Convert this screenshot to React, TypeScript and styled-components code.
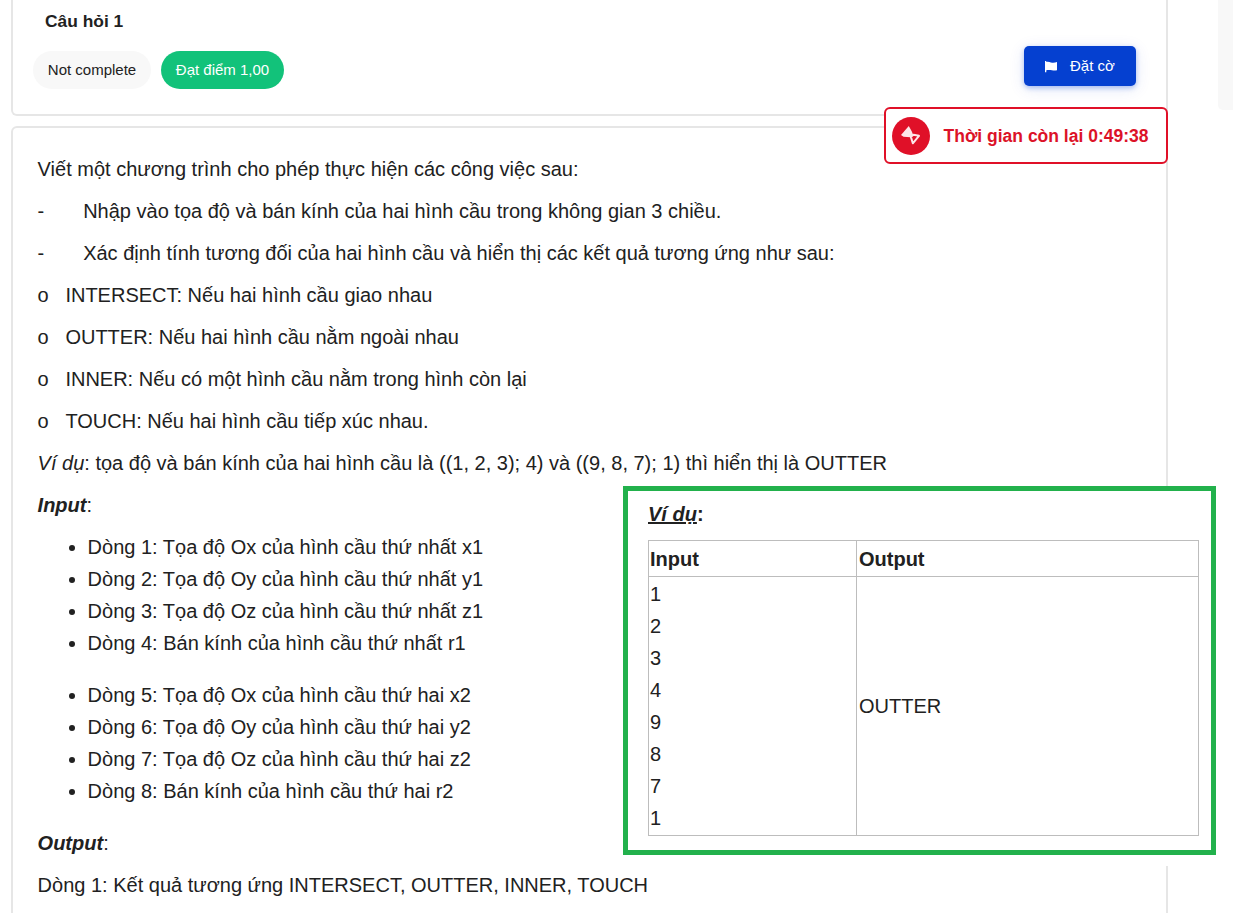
import React from 'react';
import styled, { createGlobalStyle, css } from 'styled-components';

const GlobalStyle = createGlobalStyle`
  * { box-sizing: border-box; }
  html, body { margin: 0; height: 100%; overflow: hidden; background: #fff; }
  body {
    font-family: 'Liberation Sans', Arial, sans-serif;
    font-size: 20px;
    line-height: 32px;
    color: #212121;
  }
`;

const Page = styled.div`
  position: relative;
  display: flex;
  justify-content: space-between;
  height: 913px;
  overflow: hidden;
`;

const Column = styled.main`
  display: flex;
  flex-direction: column;
  gap: 10px;
  width: 1157px;
  margin-left: 11px;
`;

const SidePanel = styled.aside`
  width: 15px;
  height: 110px;
  background: #f8f8f8;
  border-bottom-left-radius: 5px;
`;

const card = css`
  border: 2px solid #e6e6e6;
  flex: none;
`;

const InfoCard = styled.section`
  ${card}
  display: flex;
  justify-content: space-between;
  align-items: flex-start;
  height: 116px;
  border-top: 0;
  border-radius: 0 0 6px 6px;
  padding: 0 30px 0 20px;
`;

const QuestionCard = styled.section`
  ${card}
  height: 860px;
  border-radius: 6px;
  padding: 25px 25px 25px 24.6px;
`;

const QuestionTitle = styled.h3`
  margin: 9px 0 18px 12px;
  font-size: 17.4px;
  line-height: 24px;
  font-weight: 700;
`;

const Pills = styled.div`
  display: flex;
  gap: 10px;
`;

const Pill = styled.span<{ $tone: 'plain' | 'success' }>`
  display: flex;
  align-items: center;
  justify-content: center;
  width: ${p => (p.$tone === 'plain' ? 118 : 123)}px;
  height: 38px;
  border-radius: 19px;
  font-size: 15px;
  white-space: nowrap;
  color: ${p => (p.$tone === 'plain' ? '#212121' : '#fff')};
  background: ${p => (p.$tone === 'plain' ? '#f8f8f8' : '#12c27a')};
`;

const FlagButton = styled.button`
  display: flex;
  align-items: center;
  gap: 13px;
  width: 112px;
  height: 40px;
  margin-top: 46px;
  padding: 0 0 0 21px;
  border: 0;
  border-radius: 5px;
  background: #0540d0;
  color: #fff;
  font: 15px/24px 'Liberation Sans', Arial, sans-serif;
  white-space: nowrap;
  box-shadow: 0 2px 5px rgba(5, 64, 208, 0.3), 0 3px 16px rgba(5, 64, 208, 0.12);
`;

const FlagIcon = styled.svg`
  margin-top: 2px;
`;

const Paragraph = styled.p`
  margin: 0 0 10px;
  white-space: nowrap;
`;

const List = styled.ul`
  margin: 0 0 20px;
  padding-left: 50px;
  list-style: disc;
`;

const Timer = styled.div`
  position: absolute;
  left: 884px;
  top: 107px;
  width: 284px;
  height: 57px;
  display: flex;
  align-items: center;
  gap: 13.5px;
  padding-left: 6px;
  border: 2px solid #e01028;
  border-radius: 6px;
  background: #fff;
  color: #dc1228;
  font-size: 17.5px;
  font-weight: 700;
  white-space: nowrap;
`;

const ExampleBackdrop = styled.div`
  position: absolute;
  left: 623px;
  top: 486px;
  height: 380px;
  background: #fff;
`;

const Example = styled.section`
  width: 593px;
  height: 369px;
  padding: 7px 12px 0 20px;
  border: 5px solid #22b14c;
`;

const ExampleTitle = styled.p`
  margin: 0 0 10px;
  font-weight: 700;
`;

const ExampleTable = styled.table`
  width: 551px;
  table-layout: fixed;
  border-collapse: separate;
  border-spacing: 0;
  border: solid #bdbdbd;
  border-width: 1px 0 0 1px;
`;

const Cell = styled.td<{ $wide?: boolean }>`
  width: ${p => (p.$wide ? 342 : 208)}px;
  padding: 1px;
  padding-left: ${p => (p.$wide ? 2 : 1)}px;
  border: solid #bdbdbd;
  border-width: 0 1px 1px 0;
  vertical-align: middle;
  text-align: left;
`;

const HeadCell = styled(Cell)`
  padding-top: 2px;
  font-weight: 700;
`;

const firstInputs = [
  'Dòng 1: Tọa độ Ox của hình cầu thứ nhất x1',
  'Dòng 2: Tọa độ Oy của hình cầu thứ nhất y1',
  'Dòng 3: Tọa độ Oz của hình cầu thứ nhất z1',
  'Dòng 4: Bán kính của hình cầu thứ nhất r1',
];

const secondInputs = [
  'Dòng 5: Tọa độ Ox của hình cầu thứ hai x2',
  'Dòng 6: Tọa độ Oy của hình cầu thứ hai y2',
  'Dòng 7: Tọa độ Oz của hình cầu thứ hai z2',
  'Dòng 8: Bán kính của hình cầu thứ hai r2',
];

const tasks = [
  'Nhập vào tọa độ và bán kính của hai hình cầu trong không gian 3 chiều.',
  'Xác định tính tương đối của hai hình cầu và hiển thị các kết quả tương ứng như sau:',
];

const outcomes = [
  'INTERSECT: Nếu hai hình cầu giao nhau',
  'OUTTER: Nếu hai hình cầu nằm ngoài nhau',
  'INNER: Nếu có một hình cầu nằm trong hình còn lại',
  'TOUCH: Nếu hai hình cầu tiếp xúc nhau.',
];

const sample = [1, 2, 3, 4, 9, 8, 7, 1];

const dash = '-' + '\u00a0'.repeat(7);
const circle = 'o' + '\u00a0'.repeat(3);

export default function App() {
  return (
    <>
      <GlobalStyle />
      <Page>
        <Column>
          <InfoCard>
            <div>
              <QuestionTitle>Câu hỏi 1</QuestionTitle>
              <Pills>
                <Pill $tone="plain">Not complete</Pill>
                <Pill $tone="success">Đạt điểm 1,00</Pill>
              </Pills>
            </div>
            <FlagButton>
              <FlagIcon width="12" height="12" viewBox="0 0 12 12">
                <path
                  d="M0 0H1.300V1C3 .6 4.500 1 6 1.400S10 1.700 12 1.100V9.200C10 9.700 8.500 9.600 7 9.300S3.200 8.800 1.300 9.200V11.200H0z"
                  fill="#fff"
                />
              </FlagIcon>
              Đặt cờ
            </FlagButton>
          </InfoCard>
          <QuestionCard>
            <Paragraph>Viết một chương trình cho phép thực hiện các công việc sau:</Paragraph>
            {tasks.map(t => (
              <Paragraph key={t}>{dash + t}</Paragraph>
            ))}
            {outcomes.map(t => (
              <Paragraph key={t}>{circle + t}</Paragraph>
            ))}
            <Paragraph>
              <em>Ví dụ</em>: tọa độ và bán kính của hai hình cầu là ((1, 2, 3); 4) và ((9, 8, 7); 1) thì hiển
              thị là OUTTER
            </Paragraph>
            <Paragraph>
              <strong><em>Input</em></strong>:
            </Paragraph>
            <List>
              {firstInputs.map(t => <li key={t}>{t}</li>)}
            </List>
            <List>
              {secondInputs.map(t => <li key={t}>{t}</li>)}
            </List>
            <Paragraph>
              <strong><em>Output</em></strong>:
            </Paragraph>
            <Paragraph>Dòng 1: Kết quả tương ứng INTERSECT, OUTTER, INNER, TOUCH</Paragraph>
          </QuestionCard>
        </Column>
        <SidePanel />
        <Timer>
          <svg width="38" height="38" viewBox="0 0 38 38">
            <circle cx="19" cy="19" r="19" fill="#e01028" />
            <path d="M9 18L16.800 9L19.800 14.500L21.500 18.800L18.500 20.300L11.500 19.800Z" fill="#fde6e9" />
            <path
              d="M18.800 19.600L21.500 17.700L27 18.800L20.800 26.300Z"
              fill="none"
              stroke="#fde6e9"
              strokeWidth="2"
              strokeLinejoin="round"
            />
          </svg>
          Thời gian còn lại 0:49:38
        </Timer>
        <ExampleBackdrop>
          <Example>
            <ExampleTitle>
              <u><em>Ví dụ</em></u>:
            </ExampleTitle>
            <ExampleTable>
              <tbody>
                <tr>
                  <HeadCell>Input</HeadCell>
                  <HeadCell $wide>Output</HeadCell>
                </tr>
                <tr>
                  <Cell>
                    {sample.map((n, i) => <div key={i}>{n}</div>)}
                  </Cell>
                  <Cell $wide>OUTTER</Cell>
                </tr>
              </tbody>
            </ExampleTable>
          </Example>
        </ExampleBackdrop>
      </Page>
    </>
  );
}
